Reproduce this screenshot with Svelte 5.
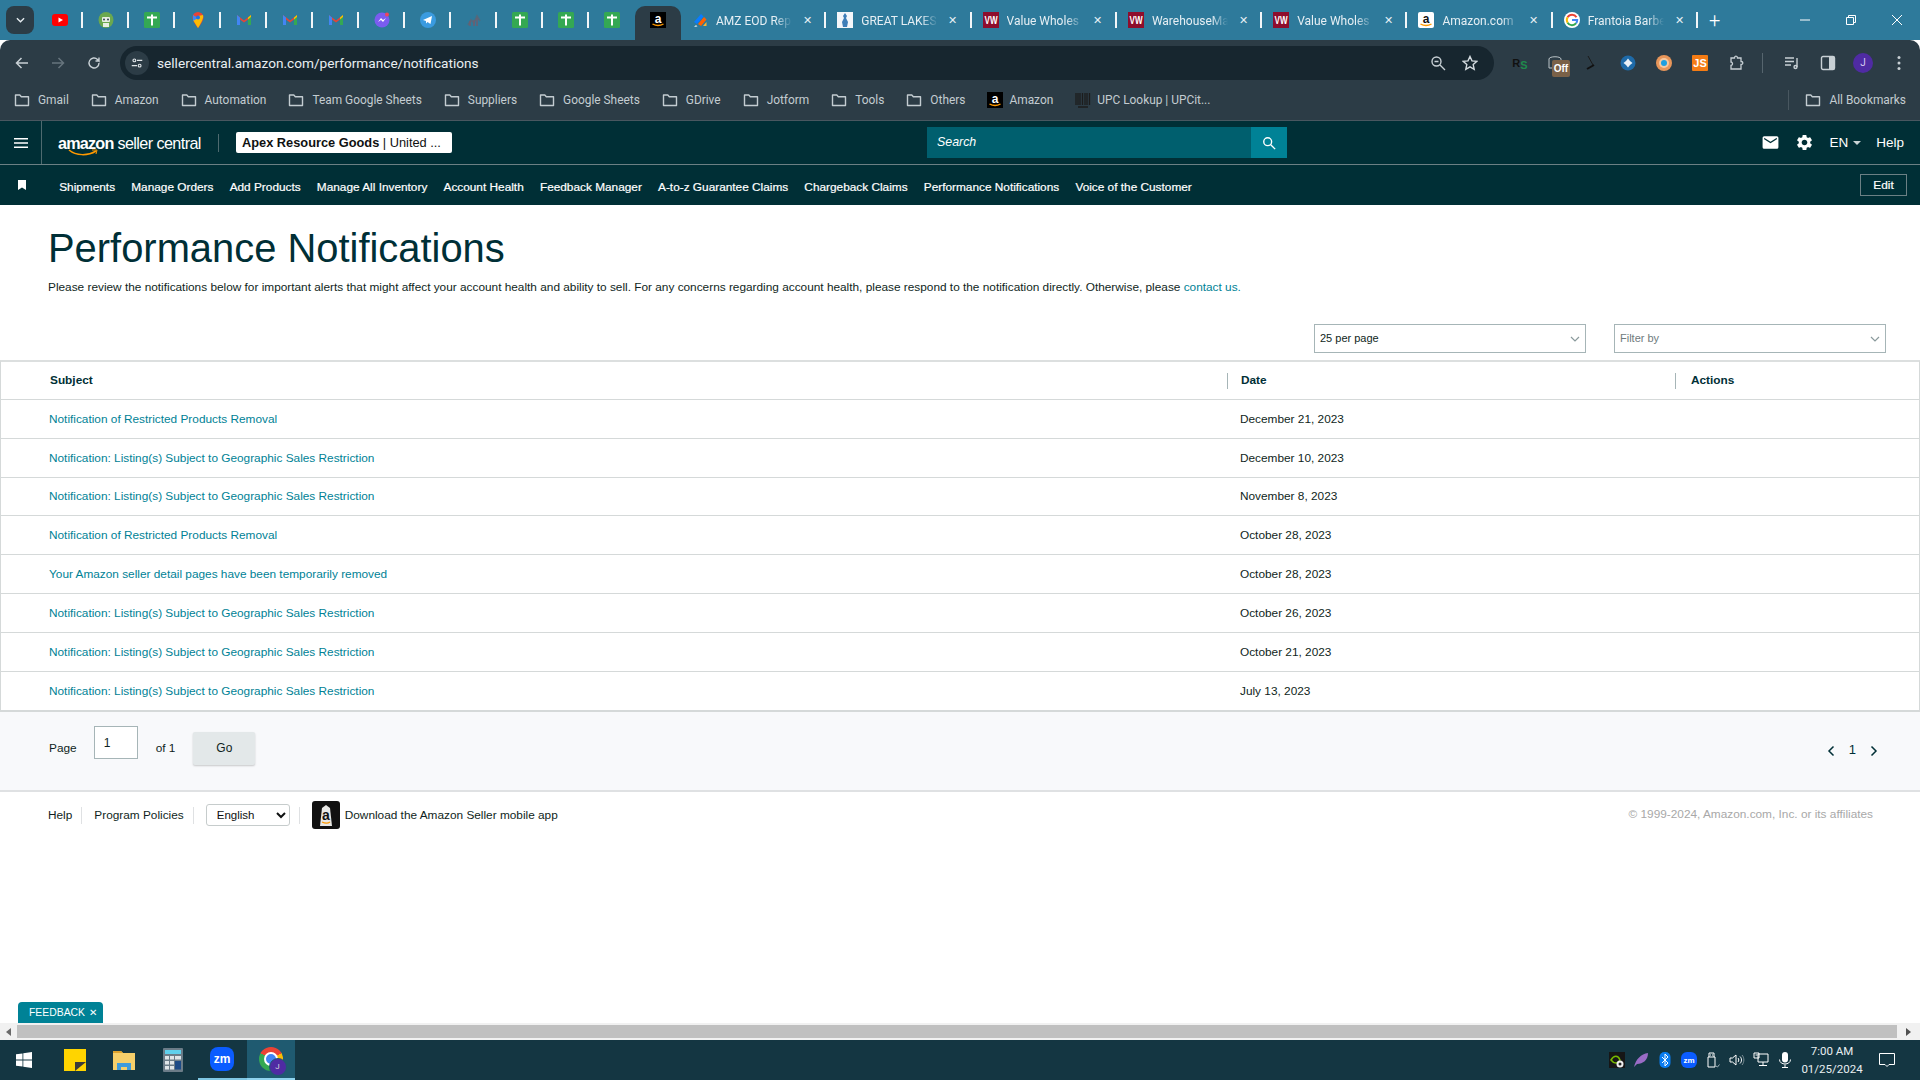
<script>
	const pinned = ['youtube', 'robot', 'sheets', 'maps', 'gmail', 'gmail', 'gmail', 'messenger', 'telegram', 'chart', 'sheets', 'sheets', 'sheets'];
	const tabs = [
		{ icon: 'jot', title: 'AMZ EOD Rep' },
		{ icon: 'lakes', title: 'GREAT LAKES' },
		{ icon: 'vw', title: 'Value Wholes' },
		{ icon: 'vw', title: 'WarehouseMa' },
		{ icon: 'vw', title: 'Value Wholes' },
		{ icon: 'amazon', title: 'Amazon.com' },
		{ icon: 'google', title: 'Frantoia Barbe' }
	];
	const bookmarks = ['Gmail', 'Amazon', 'Automation', 'Team Google Sheets', 'Suppliers', 'Google Sheets', 'GDrive', 'Jotform', 'Tools', 'Others'];
	const navLinks = ['Shipments', 'Manage Orders', 'Add Products', 'Manage All Inventory', 'Account Health', 'Feedback Manager', 'A-to-z Guarantee Claims', 'Chargeback Claims', 'Performance Notifications', 'Voice of the Customer'];
	const restricted = 'Notification of Restricted Products Removal';
	const geo = 'Notification: Listing(s) Subject to Geographic Sales Restriction';
	const rows = [
		{ subject: restricted, date: 'December 21, 2023' },
		{ subject: geo, date: 'December 10, 2023' },
		{ subject: geo, date: 'November 8, 2023' },
		{ subject: restricted, date: 'October 28, 2023' },
		{ subject: 'Your Amazon seller detail pages have been temporarily removed', date: 'October 28, 2023' },
		{ subject: geo, date: 'October 26, 2023' },
		{ subject: geo, date: 'October 21, 2023' },
		{ subject: geo, date: 'July 13, 2023' }
	];
</script>

{#snippet favicon(kind)}
	<svg class="fav" viewBox="0 0 16 16">
		{#if kind === 'youtube'}
			<rect y="2" width="16" height="12" rx="3" fill="#f00" />
			<path d="M6.500 5.500 11 8l-4.500 2.500z" fill="#fff" />
		{:else if kind === 'robot'}
			<ellipse cx="8" cy="8" rx="7.500" ry="8" fill="#6aa84f" />
			<rect x="4" y="5" width="8" height="5" rx="1" fill="#e8eee4" />
			<circle cx="6" cy="7.500" r="1" fill="#345" />
			<circle cx="10" cy="7.500" r="1" fill="#345" />
			<rect x="5" y="11" width="6" height="4" fill="#e8eee4" />
		{:else if kind === 'sheets'}
			<rect width="16" height="16" rx="1.500" fill="#34a853" />
			<path d="M3 5.500h10M8 2.500v11" stroke="#fff" stroke-width="2" />
		{:else if kind === 'maps'}
			<path d="M8 0a5.500 5.500 0 0 0-5.500 5.500C2.500 9.500 8 16 8 16s5.500-6.500 5.500-10.500A5.500 5.500 0 0 0 8 0z" fill="#ea4335" />
			<path d="M3 8l5-4 5-1c1 3-2 8-5 13z" fill="#fbbc04" />
			<path d="M3 3l5 3-5 3z" fill="#4285f4" />
			<circle cx="8" cy="5.500" r="2" fill="#1a73e8" />
		{:else if kind === 'gmail'}
			<path d="M1 13V3l7 5.500L15 3v10h-3V7.500L8 10.500 4 7.500V13z" fill="#ea4335" />
			<path d="M1 13V3l3 2.400V13z" fill="#4285f4" />
			<path d="M15 13V3l-3 2.400V13z" fill="#34a853" />
			<path d="M12 5.400 15 3v2l-3 2.500z" fill="#fbbc04" />
		{:else if kind === 'messenger'}
			<circle cx="8" cy="8" r="7.500" fill="#7a5cf0" />
			<path d="M4 10l3-4 2 2 3-2-3 4-2-2z" fill="#fff" />
			<circle cx="13" cy="2.500" r="2" fill="#f0445b" />
		{:else if kind === 'telegram'}
			<circle cx="8" cy="8" r="8" fill="#3a9be0" />
			<path d="M3 8l9-4-1.500 8-3-2-1.500 1.500V9z" fill="#fff" />
		{:else if kind === 'chart'}
			<path d="M2 13l3-5 3 3 3-7 3 5" fill="none" stroke="#56687a" stroke-width="1.500" />
			<path d="M4 14V9M8 14V8M11 14V6" stroke="#6e5d70" stroke-width="1.500" />
		{:else if kind === 'jot'}
			<path d="M2 10 9 2l2.500 2.500L5 12z" fill="#0a7cff" />
			<path d="M6 12l6-7 2.500 2.500L9 14z" fill="#ff6100" />
			<path d="M11 14l3.500-4v4z" fill="#ffb629" />
			<path d="M2 15l2-2 1.500 1.500z" fill="#dfe8ef" />
		{:else if kind === 'lakes'}
			<rect width="16" height="16" fill="#f4f7fa" />
			<path d="M8 1l2 3-1 2 2 4-1 5H6l-1-5 2-4-1-2z" fill="#3f7fb8" />
		{:else if kind === 'vw'}
			<rect width="16" height="16" fill="#8e0d2c" />
			<text x="1.500" y="12" class="fav-vw" textLength="13" lengthAdjust="spacingAndGlyphs">VW</text>
		{:else if kind === 'amazon'}
			<rect width="16" height="16" rx="2" fill="#fff" />
			<text x="8" y="10.800" class="fav-a dark" text-anchor="middle">a</text>
			<path d="M2.500 12c3.500 2 7.500 2 11 0" fill="none" stroke="#f90" stroke-width="1.400" />
		{:else if kind === 'amazon-black'}
			<rect width="16" height="16" fill="#000" />
			<text x="8" y="10.800" class="fav-a" text-anchor="middle">a</text>
			<path d="M2.500 12c3.500 2 7.500 2 11 0" fill="none" stroke="#f90" stroke-width="1.400" />
		{:else if kind === 'google'}
			<circle cx="8" cy="8" r="8" fill="#fff" />
			<path d="M12.500 5.200A5.200 5.200 0 0 0 3.600 5.300" fill="none" stroke="#ea4335" stroke-width="2" />
			<path d="M3.600 5.300a5.200 5.200 0 0 0 0 5.400" fill="none" stroke="#fbbc04" stroke-width="2" />
			<path d="M3.600 10.700a5.200 5.200 0 0 0 8.600.400" fill="none" stroke="#34a853" stroke-width="2" />
			<path d="M12.200 11.100A5.200 5.200 0 0 0 13.200 8H8" fill="none" stroke="#4285f4" stroke-width="2" />
		{:else if kind === 'upc'}
			<path d="M1 1v12M3 1v12M5 1v12M7.500 1v12M10 1v12M12 1v12M14.500 1v12" stroke="#1c1c1c" stroke-width="1.300" />
			<path d="M3 15h10" stroke="#1c1c1c" stroke-width="1.500" />
		{/if}
	</svg>
{/snippet}

{#snippet folder()}
	<svg class="folder" viewBox="0 0 16 16" fill="none">
		<path d="M1.500 3h4.300l1.500 1.700h7.200v8.800h-13z" stroke="#c3ccd1" stroke-width="1.400" stroke-linejoin="round" />
	</svg>
{/snippet}

{#snippet chevronDown()}
	<svg class="select-chevron" viewBox="0 0 10 6" fill="none">
		<path d="M1 1l4 4 4-4" stroke="#8a9a9c" stroke-width="1.200" />
	</svg>
{/snippet}

<div class="screen">
	<div class="tabstrip">
		<button class="tab-search" aria-label="Search tabs">
			<svg viewBox="0 0 10 6" fill="none"><path d="M1 1l4 4 4-4" stroke="#e6edf1" stroke-width="1.500" /></svg>
		</button>
		{#each pinned as icon}
			<div class="tab-pinned">{@render favicon(icon)}</div>
		{/each}
		<div class="tab-pinned active">{@render favicon('amazon-black')}</div>
		{#each tabs as tab}
			<div class="tab">
				{@render favicon(tab.icon)}
				<span class="tab-title">{tab.title}</span>
				<span class="tab-close">✕</span>
			</div>
		{/each}
		<span class="tab-new">+</span>
		<div class="window-controls">
			<svg viewBox="0 0 12 12" fill="none"><path d="M1 6h10" stroke="#fff" /></svg>
			<svg viewBox="0 0 12 12" fill="none"><path d="M1.500 3.500h7v7h-7zM3.500 3.500v-2h7v7h-2" stroke="#fff" /></svg>
			<svg viewBox="0 0 12 12" fill="none"><path d="M1 1l10 10M11 1 1 11" stroke="#fff" /></svg>
		</div>
	</div>

	<div class="toolbar">
		<svg class="tool" viewBox="0 0 16 16" fill="none"><path d="M14 8H3M7.500 3 2.500 8l5 5" stroke="#c8d0d5" stroke-width="1.500" /></svg>
		<svg class="tool" viewBox="0 0 16 16" fill="none"><path d="M2 8h11M8.500 3l5 5-5 5" stroke="#66747d" stroke-width="1.500" /></svg>
		<svg class="tool" viewBox="0 0 16 16" fill="none"><path d="M13 8a5 5 0 1 1-1.500-3.600L13 6V2.500M13 6H9.500" stroke="#c8d0d5" stroke-width="1.400" /></svg>
		<div class="omnibox">
			<span class="site-info">
				<svg viewBox="0 0 16 16" fill="none" stroke="#dfe5e8" stroke-width="1.300">
					<circle cx="5" cy="5" r="1.600" /><path d="M8 5h6M2 11h6" /><circle cx="11" cy="11" r="1.600" />
				</svg>
			</span>
			<span class="url">sellercentral.amazon.com/performance/notifications</span>
			<svg class="omni-icon" viewBox="0 0 16 16" fill="none" stroke="#c8d0d5" stroke-width="1.400"><circle cx="6.500" cy="6.500" r="4.500" /><path d="M10 10l5 5M4.500 6.500h4" /></svg>
			<svg class="omni-icon star" viewBox="0 0 16 16" fill="none" stroke="#d5dce0" stroke-width="1.400"><path d="M8 1.500l2 4.400 4.700.5-3.500 3.200 1 4.700L8 11.900l-4.200 2.400 1-4.700L1.300 6.400 6 5.900z" /></svg>
		</div>
		<div class="extensions">
			<span class="ext"><span class="ext-r">R</span><span class="ext-s">S</span></span>
			<span class="ext ext-off"><svg viewBox="0 0 16 16" fill="none"><path d="M1 4c0-3 12-3 12 0v9H1z" stroke="#bbc4c8" /></svg><span class="off-badge">Off</span></span>
			<span class="ext"><svg viewBox="0 0 16 16" fill="none"><path d="M4 1l5 9" stroke="#1a1a1a" /><path d="M3 14l7-4" stroke="#111" stroke-width="2" /></svg></span>
			<span class="ext"><svg viewBox="0 0 16 16"><circle cx="8" cy="8" r="7.500" fill="#1e6aa8" /><path d="M8 3.500 10 6 8 8 6 6zM8 12.500 6 10l2-2 2 2zM3.500 8 6 6l2 2-2 2zM12.500 8 10 10 8 8l2-2z" fill="#e9f1f8" /></svg></span>
			<span class="ext"><svg viewBox="0 0 16 16"><circle cx="8" cy="8" r="8" fill="#e8965a" /><circle cx="8" cy="8" r="5" fill="#f5c9a2" /><circle cx="8" cy="8" r="3" fill="#1e9fe0" /></svg></span>
			<span class="ext ext-js">JS</span>
			<span class="ext"><svg viewBox="0 0 16 16" fill="none"><path d="M3 3h3.500c0-2.500 3-2.500 3 0H13v3.500c2.500 0 2.500 3 0 3V14H3v-3.500c2 0 2-3.500 0-3.500z" stroke="#c8d0d5" stroke-width="1.300" /></svg></span>
		</div>
		<span class="tool-sep"></span>
		<svg class="tool-r" viewBox="0 0 16 16" fill="none" stroke="#c8d0d5" stroke-width="1.400"><path d="M1 3h9M1 6.500h9M1 10h6M13 3v9" /><circle cx="11.500" cy="12" r="1.500" /></svg>
		<svg class="tool-r" viewBox="0 0 16 16"><rect x="1.500" y="1.500" width="13" height="13" rx="1.500" fill="none" stroke="#c8d0d5" stroke-width="1.400" /><rect x="9" y="2" width="5" height="12" fill="#c8d0d5" /></svg>
		<span class="avatar">J</span>
		<svg class="tool-r" viewBox="0 0 16 16" fill="#c8d0d5"><circle cx="8" cy="2.500" r="1.500" /><circle cx="8" cy="8" r="1.500" /><circle cx="8" cy="13.500" r="1.500" /></svg>
	</div>

	<div class="bookmarks">
		{#each bookmarks as name}
			<span class="bookmark">{@render folder()}{name}</span>
		{/each}
		<span class="bookmark fav-mark">{@render favicon('amazon-black')}Amazon</span>
		<span class="bookmark fav-mark">{@render favicon('upc')}UPC Lookup | UPCit...</span>
		<span class="bookmark-all">{@render folder()}All Bookmarks</span>
	</div>

	<header class="sc-header">
		<div class="menu-cell">
			<svg viewBox="0 0 14 12" fill="#fff"><path d="M0 1h14v1.500H0zM0 5.250h14v1.500H0zM0 9.500h14V11H0z" /></svg>
		</div>
		<div class="logo">
			<span class="logo-amazon">amazon<svg viewBox="0 0 30 8" fill="none"><path d="M1 1c7 6 19 6 27 1" stroke="#f90" stroke-width="1.500" /><path d="M24 1h5l-1 4" stroke="#f90" stroke-width="1" /></svg></span>
			<span class="logo-seller">seller central</span>
		</div>
		<div class="account"><strong>Apex Resource Goods</strong> | United ...</div>
		<div class="search">
			<span class="search-input">Search</span>
			<span class="search-btn">
				<svg viewBox="0 0 16 16" fill="none" stroke="#fff" stroke-width="1.600"><circle cx="6.500" cy="6.500" r="4.500" /><path d="M10 10l5 5" /></svg>
			</span>
		</div>
		<div class="header-right">
			<svg class="mail" viewBox="0 0 24 24" fill="#fff"><path d="M20 4H4a2 2 0 0 0-2 2v12a2 2 0 0 0 2 2h16a2 2 0 0 0 2-2V6a2 2 0 0 0-2-2zm0 4-8 5-8-5V6l8 5 8-5v2z" /></svg>
			<svg class="gear" viewBox="0 0 24 24" fill="#fff"><path d="M19.140 12.940c.04-.3.06-.61.06-.94 0-.32-.02-.64-.07-.94l2.030-1.580a.49.49 0 0 0 .12-.61l-1.920-3.320a.488.488 0 0 0-.59-.22l-2.390.96c-.5-.38-1.030-.7-1.620-.94l-.36-2.540a.484.484 0 0 0-.48-.41h-3.840c-.24 0-.43.17-.47.41l-.36 2.540c-.59.24-1.130.57-1.620.94l-2.390-.96c-.22-.08-.47 0-.59.22L2.740 8.870c-.12.21-.08.47.12.61l2.030 1.580c-.05.3-.09.63-.09.94s.02.64.07.94l-2.030 1.580a.49.49 0 0 0-.12.61l1.920 3.320c.12.22.37.29.59.22l2.390-.96c.5.38 1.030.7 1.620.94l.36 2.540c.05.24.24.41.48.41h3.840c.24 0 .44-.17.47-.41l.36-2.540c.59-.24 1.130-.56 1.620-.94l2.390.96c.22.08.47 0 .59-.22l1.920-3.320c.12-.22.07-.47-.12-.61l-2.010-1.580zM12 15.600c-1.980 0-3.600-1.620-3.600-3.600s1.620-3.600 3.600-3.600 3.600 1.620 3.600 3.600-1.620 3.600-3.600 3.600z" /></svg>
			<span class="lang">EN<i class="caret"></i></span>
			<span class="help">Help</span>
		</div>
	</header>

	<nav class="sc-nav">
		<svg class="bookmark-flag" viewBox="0 0 8 10" fill="#fff"><path d="M0 0h8v10L4 7.500 0 10z" /></svg>
		{#each navLinks as link}
			<span class="nav-link">{link}</span>
		{/each}
		<span class="edit-btn">Edit</span>
	</nav>

	<main class="page">
		<div class="intro">
			<h1>Performance Notifications</h1>
			<p>Please review the notifications below for important alerts that might affect your account health and ability to sell. For any concerns regarding account health, please respond to the notification directly. Otherwise, please <span class="link">contact us.</span></p>
		</div>

		<div class="controls">
			<div class="fake-select">25 per page{@render chevronDown()}</div>
			<div class="fake-select placeholder">Filter by{@render chevronDown()}</div>
		</div>

		<div class="table">
			<div class="row head">
				<div class="cell subject-cell">Subject</div>
				<div class="cell"><span class="head-sep"></span>Date</div>
				<div class="cell actions-cell"><span class="head-sep"></span>Actions</div>
			</div>
			{#each rows as row}
				<div class="row">
					<div class="cell link">{row.subject}</div>
					<div class="cell date">{row.date}</div>
					<div class="cell"></div>
				</div>
			{/each}
		</div>

		<div class="pager">
			<div class="pager-left">
				<span>Page</span>
				<input class="page-input" value="1" />
				<span>of 1</span>
				<button class="go">Go</button>
			</div>
			<div class="pager-right">
				<svg viewBox="0 0 8 12" fill="none"><path d="M6.500 1.500 2 6l4.500 4.500" stroke="#002f36" stroke-width="1.500" /></svg>
				<span>1</span>
				<svg viewBox="0 0 8 12" fill="none"><path d="M1.500 1.500 6 6l-4.500 4.500" stroke="#002f36" stroke-width="1.500" /></svg>
			</div>
		</div>

		<footer class="footer">
			<span class="foot-link">Help</span>
			<span class="foot-sep"></span>
			<span class="foot-link">Program Policies</span>
			<span class="foot-sep"></span>
			<select class="lang-select"><option>English</option></select>
			<span class="foot-sep"></span>
			<svg class="app-icon" viewBox="0 0 28 28">
				<rect width="28" height="28" rx="3" fill="#111" />
				<path d="M10 7l4-3 4 3 2 18H8z" fill="#e8e8e6" />
				<text x="14" y="19" class="app-a" text-anchor="middle">a</text>
				<path d="M10 21c3 1.500 6 1.500 8 0" fill="none" stroke="#f90" stroke-width="1.200" />
			</svg>
			<span class="foot-link app-text">Download the Amazon Seller mobile app</span>
			<span class="copyright">© 1999-2024, Amazon.com, Inc. or its affiliates</span>
		</footer>
	</main>

	<div class="feedback">FEEDBACK <span class="feedback-x">✕</span></div>

	<div class="scrollbar">
		<i class="arrow-left"></i>
		<div class="thumb"></div>
		<i class="arrow-right"></i>
	</div>

	<div class="taskbar">
		<svg class="win" viewBox="0 0 16 16" fill="#fff"><path d="M0 2.300 6.500 1.400v6.200H0zM7.300 1.300 16 0v7.600H7.300zM0 8.400h6.500v6.200L0 13.700zM7.300 8.400H16V16l-8.700-1.300z" /></svg>
		<span class="task">
			<svg viewBox="0 0 24 24"><rect x="1" y="1" width="22" height="22" fill="#ffd400" /><path d="M12 23V14h11z" fill="#3a3a3a" /></svg>
		</span>
		<span class="task">
			<svg viewBox="0 0 24 24"><path d="M1 3h8l2 2h12v17H1z" fill="#f6cf6a" /><path d="M1 3h8l2 2H1z" fill="#dea22d" /><path d="M5 22v-7h14v7h-4v-3H9v3z" fill="#3f9bdc" /></svg>
		</span>
		<span class="task">
			<svg viewBox="0 0 24 24"><rect x="2" y="0" width="20" height="24" rx="1" fill="#6b7c88" /><rect x="4" y="2" width="16" height="4" fill="#5fd0ec" /><path d="M4 8h4v3.500H4zM9 8h4v3.500H9zM4 13h4v3.500H4zM9 13h4v3.500H9zM4 18h4v3.500H4zM9 18h4v3.500H9z" fill="#dfe5e8" /><rect x="14" y="13" width="6" height="8.500" fill="#1c4a86" /><rect x="14" y="8" width="6" height="3.500" fill="#dfe5e8" /></svg>
		</span>
		<span class="task zoom-task">
			<svg viewBox="0 0 24 24"><rect width="24" height="24" rx="8" fill="#0b5cff" /><text x="12" y="16" class="zm" text-anchor="middle">zm</text></svg>
		</span>
		<span class="task chrome-task">
			<span class="chrome"><i></i></span>
			<span class="chrome-badge">J</span>
		</span>
		<div class="tray">
			<span class="tray-icon nvidia"><svg viewBox="0 0 16 16"><rect width="16" height="16" fill="#161616" /><path d="M2 8c3-5 7-5 9 0-2 4-6 4-9 0z" fill="none" stroke="#76b900" stroke-width="1.500" /><circle cx="11" cy="12" r="3.500" fill="#eee" /><circle cx="11" cy="12" r="1.500" fill="#222" /></svg></span>
			<span class="tray-icon"><svg viewBox="0 0 16 16"><path d="M1 15C3 7 8 2 15 1c0 7-5 11-11 11z" fill="#9a6cc6" /></svg></span>
			<span class="tray-icon"><svg viewBox="0 0 16 16"><rect x="2.500" width="11" height="16" rx="5" fill="#0a7cf0" /><path d="M5 5l6 6-3 3V2l3 3-6 6" fill="none" stroke="#fff" stroke-width="1" /></svg></span>
			<span class="tray-icon"><svg viewBox="0 0 24 24"><rect width="24" height="24" rx="9" fill="#0b5cff" /><text x="12" y="16" class="zm" text-anchor="middle">zm</text></svg></span>
			<span class="tray-icon"><svg viewBox="0 0 16 16" fill="none" stroke="#fff"><path d="M3 5h7v10H3zM4 5V1h5v4" /><path d="M5.500 2.500v1M7.500 2.500v1" /><path d="M11 14l1.500 1 2-2.500" stroke="#9fb0b8" /></svg></span>
			<span class="tray-icon"><svg viewBox="0 0 16 16" fill="none" stroke="#fff"><path d="M1 6h2.500L7 3v10L3.500 10H1z" /><path d="M9 6c1 1 1 3 0 4M11 4.500c2 2 2 5 0 7" /><path d="M13 3c2.500 3 2.500 7 0 10" stroke="#7d8f97" /></svg></span>
			<span class="tray-icon"><svg viewBox="0 0 16 16" fill="none" stroke="#fff"><path d="M5 2h10v8H5zM10 10v3M6 13.500h8M1 1h5v5H1z" /><path d="M2.500 3h2" /></svg></span>
			<span class="tray-icon"><svg viewBox="0 0 16 16" fill="#fff"><rect x="5" y="0" width="6" height="10.500" rx="3" /><path d="M2.500 7.500c0 6 11 6 11 0M8 12.500V15M5 15.500h6" fill="none" stroke="#fff" /></svg></span>
			<div class="clock"><span>7:00 AM</span><span>01/25/2024</span></div>
			<svg class="notify" viewBox="0 0 16 16" fill="none" stroke="#fff" stroke-width="1"><path d="M.5 1.500h15v11h-5.500L8 14.500l-2-2H.5z" /></svg>
		</div>
	</div>
</div>

<style>
	:global(body) {
		margin: 0;
		background: #fff;
	}

	.screen {
		position: relative;
		width: 1920px;
		height: 1080px;
		overflow: hidden;
		display: flex;
		flex-direction: column;
		font-family: 'Liberation Sans', Arial, sans-serif;
		font-size: 11.83px;
		color: #0f1111;
	}

	/* browser chrome */
	.tabstrip {
		height: 40px;
		background: #2e7a9b;
		display: flex;
		flex: none;
		font-family: Roboto, sans-serif;
		font-size: 12px;
		color: #e6eff4;
	}

	.tab-search {
		width: 28px;
		height: 28px;
		margin: 6px 3px 0 6px;
		padding: 0;
		border: 0;
		border-radius: 8px;
		background: #2c3c46;
		display: flex;
		align-items: center;
		justify-content: center;
	}

	.tab-search svg {
		width: 9px;
		height: 6px;
	}

	.tab-pinned {
		width: 46px;
		height: 34px;
		margin-top: 6px;
		padding-bottom: 6px;
		box-sizing: border-box;
		display: flex;
		align-items: center;
		justify-content: center;
		position: relative;
		flex: none;
	}

	.tab-pinned::after,
	.tab::after {
		content: '';
		position: absolute;
		right: 0;
		top: 6px;
		height: 16px;
		width: 2px;
		background: #f2f6f8;
	}

	.tab-pinned.active {
		background: #2c3c46;
		border-radius: 10px 10px 0 0;
	}

	.tab-pinned.active::after,
	.tab-pinned:has(+ .active)::after {
		display: none;
	}

	.fav {
		width: 16px;
		height: 16px;
		flex: none;
	}

	.fav-vw {
		font: bold 10px 'Liberation Sans', sans-serif;
		fill: #fff;
	}

	.fav-a {
		font: bold 12px 'Liberation Sans', sans-serif;
		fill: #fff;
	}

	.fav-a.dark {
		fill: #111;
	}

	.tab {
		width: 145.3px;
		height: 34px;
		margin-top: 6px;
		flex: none;
		position: relative;
		box-sizing: border-box;
		padding: 0 12px 6px 11px;
		display: flex;
		align-items: center;
		gap: 8px;
	}

	.tab-title {
		flex: 1;
		min-width: 0;
		padding-top: 2px;
		white-space: nowrap;
		overflow: hidden;
		-webkit-mask-image: linear-gradient(90deg, #000 78%, transparent 100%);
		mask-image: linear-gradient(90deg, #000 78%, transparent 100%);
	}

	.tab-close {
		font-size: 11px;
		width: 14px;
		text-align: center;
	}

	.tab-new {
		font-size: 20px;
		font-weight: 300;
		color: #fff;
		margin: 4px 0 0 11px;
		line-height: 32px;
	}

	.window-controls {
		margin-left: auto;
		display: flex;
		gap: 34px;
		padding: 14px 17px 0 0;
	}

	.window-controls svg {
		width: 12px;
		height: 12px;
	}

	.toolbar {
		height: 40px;
		background: #2c3c46;
		flex: none;
		display: flex;
		align-items: center;
		box-sizing: border-box;
		padding: 6px 0 0 14px;
		border-radius: 10px 10px 0 0;
		font-family: Roboto, sans-serif;
	}

	.tool {
		width: 16px;
		height: 16px;
		margin-right: 20px;
		flex: none;
	}

	.omnibox {
		width: 1374px;
		height: 34px;
		margin-left: -2px;
		background: #17262f;
		border-radius: 17px;
		display: flex;
		align-items: center;
		box-sizing: border-box;
		padding-left: 5px;
		flex: none;
	}

	.site-info {
		width: 24px;
		height: 24px;
		border-radius: 50%;
		background: #2c3c46;
		display: flex;
		align-items: center;
		justify-content: center;
	}

	.site-info svg {
		width: 14px;
		height: 14px;
	}

	.url {
		margin-left: 8px;
		font-size: 13.65px;
		color: #e8eef1;
	}

	.omni-icon {
		width: 16px;
		height: 16px;
		margin-left: auto;
		margin-right: 16px;
	}

	.omni-icon.star {
		margin-left: 0;
	}

	.extensions {
		display: flex;
		align-items: center;
		gap: 20px;
		margin-left: 18px;
		flex: none;
	}

	.ext {
		width: 16px;
		height: 16px;
		display: flex;
		align-items: center;
		justify-content: center;
		position: relative;
		flex: none;
		font: bold 11px 'Liberation Sans', sans-serif;
	}

	.ext svg {
		width: 16px;
		height: 16px;
	}

	.ext-r {
		color: #111;
	}

	.ext-s {
		color: #1f8b4c;
		margin-top: 3px;
	}

	.off-badge {
		position: absolute;
		left: 4px;
		top: 5px;
		width: 18px;
		height: 17px;
		background: #7a6148;
		border-radius: 2px;
		color: #fff;
		font: bold 10px/17px 'Liberation Sans', sans-serif;
		text-align: center;
	}

	.ext-js {
		background: #f57c14;
		color: #fff;
		border-radius: 1px;
	}

	.tool-sep {
		width: 1px;
		height: 20px;
		background: #56656e;
		margin: 0 21px 0 18px;
		flex: none;
	}

	.tool-r {
		width: 16px;
		height: 16px;
		margin-right: 20px;
		flex: none;
	}

	.avatar {
		width: 20px;
		height: 20px;
		border-radius: 50%;
		background: #4f2ba3;
		color: #d8ccf2;
		font-size: 10px;
		line-height: 20px;
		text-align: center;
		margin: 0 18px 0 -3px;
		flex: none;
	}

	.bookmarks {
		height: 41px;
		box-sizing: border-box;
		background: #2c3c46;
		border-bottom: 1px solid #495760;
		flex: none;
		display: flex;
		align-items: center;
		padding: 0 14px 0 3px;
		font-family: Roboto, sans-serif;
		font-size: 11.9px;
		color: #c3ccd1;
	}

	.bookmark,
	.bookmark-all {
		display: flex;
		align-items: center;
		gap: 8px;
		padding: 0 11px;
		white-space: nowrap;
	}

	.fav-mark {
		gap: 6px;
	}

	.bookmark-all {
		margin-left: auto;
		padding: 0 0 0 16px;
		border-left: 1px solid #495760;
		height: 20px;
	}

	.folder {
		width: 16px;
		height: 16px;
		flex: none;
	}

	/* seller central header */
	.sc-header {
		height: 44px;
		box-sizing: border-box;
		background: #002f36;
		border-bottom: 1px solid #6c8084;
		flex: none;
		display: flex;
		align-items: center;
		color: #fff;
	}

	.menu-cell {
		width: 42px;
		height: 100%;
		box-sizing: border-box;
		border-right: 1px solid #4e6a6f;
		display: flex;
		align-items: center;
		justify-content: center;
		flex: none;
	}

	.menu-cell svg {
		width: 14px;
		height: 12px;
	}

	.logo {
		margin-left: 16px;
		width: 160px;
		height: 18px;
		border-right: 1px solid #4e6a6f;
		display: flex;
		align-items: center;
		gap: 4px;
		flex: none;
		font-size: 16.2px;
		line-height: 16px;
	}

	.logo-amazon {
		font-weight: bold;
		letter-spacing: -0.8px;
		position: relative;
	}

	.logo-amazon svg {
		position: absolute;
		left: 8px;
		top: 14px;
		width: 34px;
		height: 8px;
	}

	.logo-seller {
		letter-spacing: -0.6px;
	}

	.account {
		margin-left: 17px;
		width: 216px;
		height: 21px;
		box-sizing: border-box;
		padding-left: 6px;
		background: #fff;
		border-radius: 2px;
		color: #0f1111;
		font-size: 12.8px;
		line-height: 21px;
		flex: none;
		white-space: nowrap;
		overflow: hidden;
	}

	.account strong {
		font-weight: 600;
	}

	.search {
		margin-left: 475px;
		width: 360px;
		height: 31px;
		display: flex;
		flex: none;
	}

	.search-input {
		flex: 1;
		background: #005f6e;
		font-style: italic;
		font-size: 12.4px;
		line-height: 31px;
		padding-left: 10px;
	}

	.search-btn {
		width: 36px;
		background: #008296;
		display: flex;
		align-items: center;
		justify-content: center;
	}

	.search-btn svg {
		width: 14px;
		height: 14px;
	}

	.header-right {
		margin-left: auto;
		display: flex;
		align-items: center;
		font-size: 13.5px;
		padding-right: 16px;
	}

	.mail {
		width: 19px;
		height: 19px;
		margin-right: 15px;
	}

	.gear {
		width: 19px;
		height: 19px;
		margin-right: 15px;
	}

	.lang {
		display: flex;
		align-items: center;
		margin-right: 15px;
	}

	.caret {
		width: 0;
		height: 0;
		border: 4px solid transparent;
		border-top-color: #c9d4d6;
		border-bottom: 0;
		margin-left: 5px;
	}

	.sc-nav {
		height: 40px;
		background: #002f36;
		flex: none;
		display: flex;
		align-items: center;
		box-sizing: border-box;
		padding: 4px 0 0 18px;
		gap: 16.2px;
		color: #fff;
		-webkit-text-stroke: 0.2px #fff;
	}

	.bookmark-flag {
		width: 8px;
		height: 10px;
		margin: -5px 17px 0 0;
	}

	.edit-btn {
		margin-left: auto;
		margin-right: 13px;
		margin-top: -5px;
		width: 47px;
		height: 22px;
		box-sizing: border-box;
		border: 1px solid #6c8084;
		line-height: 20px;
		text-align: center;
	}

	/* page */
	.page {
		flex: 1;
		background: #fff;
		min-height: 0;
	}

	.intro {
		padding: 19px 0 0 48px;
	}

	h1 {
		margin: 0;
		font-size: 39.9px;
		font-weight: 400;
		line-height: 48px;
		color: #002f36;
	}

	.intro p {
		margin: 7px 0 0;
		line-height: 16px;
		color: #0f1f22;
	}

	.link {
		color: #008296;
	}

	.controls {
		display: flex;
		justify-content: flex-end;
		gap: 28px;
		padding: 29px 34px 0 0;
	}

	.fake-select {
		width: 272px;
		height: 29px;
		box-sizing: border-box;
		border: 1px solid #a6b5b7;
		font-size: 11px;
		line-height: 27px;
		padding-left: 5px;
		position: relative;
		color: #0f1f22;
	}

	.fake-select.placeholder {
		color: #6f7b7d;
	}

	.select-chevron {
		position: absolute;
		right: 5px;
		top: 11px;
		width: 10px;
		height: 6px;
	}

	.table {
		margin-top: 7px;
		border-top: 2px solid #dcdfdf;
		border-left: 1px solid #d5d9d9;
		border-right: 1px solid #d5d9d9;
		border-bottom: 2px solid #d5d9d9;
	}

	.row {
		display: grid;
		grid-template-columns: 1226px 448px 1fr;
		height: 38.8px;
		box-sizing: border-box;
		border-bottom: 1px solid #d5d9d9;
		align-items: center;
	}

	.row.head {
		height: 38px;
		padding-bottom: 2px;
	}

	.row:last-child {
		border-bottom: 0;
	}

	.cell {
		display: flex;
		align-items: center;
		padding-left: 14px;
		position: relative;
		white-space: nowrap;
	}

	.cell.link {
		padding-left: 48px;
	}

	.date {
		color: #0f1f22;
		padding-left: 13px;
	}

	.head .cell {
		color: #002f36;
		font-weight: 600;
	}

	.head .subject-cell {
		padding-left: 49px;
	}

	.head .actions-cell {
		padding-left: 16px;
	}

	.head-sep {
		position: absolute;
		left: 0;
		top: 0;
		width: 1px;
		height: 16px;
		background: #a6b5b7;
	}

	.pager {
		height: 80px;
		box-sizing: border-box;
		background: #f8f9fb;
		border-bottom: 2px solid #dfe1e3;
		display: flex;
		justify-content: space-between;
		padding: 14px 42px 0 49px;
	}

	.pager-left {
		display: flex;
		align-items: center;
		gap: 18px;
		height: 44px;
		color: #0f1f22;
	}

	.page-input {
		width: 44px;
		height: 33px;
		box-sizing: border-box;
		margin: 0 0 11px -1px;
		border: 1px solid #a6b5b7;
		padding: 0 0 0 9px;
		background: #fff;
		font: 12px 'Liberation Sans', sans-serif;
		color: #0f1f22;
	}

	.go {
		width: 62px;
		height: 33px;
		border: 0;
		border-radius: 2px;
		background: #e3e8e9;
		box-shadow: 0 1px 2px rgba(0, 0, 0, 0.2);
		font: 12px 'Liberation Sans', sans-serif;
		color: #0f1f22;
		padding: 0;
	}

	.pager-right {
		display: flex;
		align-items: center;
		gap: 14px;
		height: 47px;
		font-size: 13px;
		color: #002f36;
	}

	.pager-right svg {
		width: 8px;
		height: 12px;
		margin-top: 2px;
	}

	.footer {
		display: flex;
		align-items: center;
		height: 50px;
		box-sizing: border-box;
		padding: 0 47px 0 48px;
		margin-top: -2px;
	}

	.foot-link {
		color: #0f1f22;
		white-space: nowrap;
	}

	.foot-sep {
		width: 1px;
		height: 17px;
		background: #dfe1e3;
		margin: 0 12px 0 9px;
		flex: none;
	}

	.lang-select {
		width: 84px;
		height: 22px;
		border: 1px solid #c6cccc;
		border-radius: 3px;
		background: #fff;
		font: 11.5px 'Liberation Sans', sans-serif;
		padding-left: 6px;
		color: #0f1111;
	}

	.app-icon {
		width: 28px;
		height: 28px;
		margin-right: 5px;
		flex: none;
	}

	.app-a {
		font: bold 14px 'Liberation Sans', sans-serif;
		fill: #111;
	}

	.copyright {
		margin-left: auto;
		color: #a8a8a8;
		margin-bottom: 3px;
	}

	.feedback {
		position: absolute;
		left: 18px;
		top: 1002px;
		width: 85px;
		height: 21px;
		box-sizing: border-box;
		border-radius: 4px 4px 0 0;
		background: #008296;
		color: #fff;
		font-size: 10.4px;
		line-height: 21px;
		padding-left: 11px;
		white-space: nowrap;
	}

	.feedback-x {
		font-size: 10px;
		margin-left: 1px;
	}

	.scrollbar {
		height: 17px;
		background: #f1f1f1;
		flex: none;
		display: flex;
		align-items: center;
	}

	.thumb {
		flex: 1;
		height: 13px;
		background: #c0c0c0;
	}

	.arrow-left,
	.arrow-right {
		width: 17px;
		display: flex;
		justify-content: center;
		flex: none;
	}

	.arrow-left::before {
		content: '';
		border: 4px solid transparent;
		border-right: 5px solid #6a6a6a;
		border-left: 0;
	}

	.arrow-right {
		width: 23px;
	}

	.arrow-right::before {
		content: '';
		border: 4px solid transparent;
		border-left: 5px solid #505050;
		border-right: 0;
	}

	.taskbar {
		height: 40px;
		background: #143642;
		flex: none;
		display: flex;
		align-items: center;
		color: #fff;
		font-family: Roboto, sans-serif;
	}

	.win {
		width: 16px;
		height: 16px;
		margin: 0 18.5px 0 16px;
		flex: none;
	}

	.task {
		width: 49px;
		height: 40px;
		display: flex;
		align-items: center;
		justify-content: center;
		flex: none;
		position: relative;
		box-sizing: border-box;
	}

	.task svg {
		width: 24px;
		height: 24px;
	}

	.zm {
		font: bold 12px 'Liberation Sans', sans-serif;
		fill: #fff;
	}

	.zoom-task {
		border-bottom: 2px solid #7fc6e2;
	}

	.chrome-task {
		background: #1f5a70;
		border-bottom: 2px solid #8fd3ee;
		width: 48px;
	}

	.chrome {
		width: 24px;
		height: 24px;
		border-radius: 50%;
		background: conic-gradient(from 300deg, #ea4335 0 120deg, #fbbc04 120deg 240deg, #34a853 240deg 360deg);
		display: flex;
		align-items: center;
		justify-content: center;
	}

	.chrome i {
		width: 10px;
		height: 10px;
		border-radius: 50%;
		background: #4285f4;
		border: 2px solid #fff;
	}

	.chrome-badge {
		position: absolute;
		left: 22px;
		top: 18px;
		width: 16px;
		height: 16px;
		border-radius: 50%;
		background: #4f2ba3;
		border: 1px solid #1f5a70;
		font-size: 8px;
		line-height: 16px;
		text-align: center;
		color: #ddd;
	}

	.tray {
		margin-left: auto;
		display: flex;
		align-items: center;
		gap: 8px;
	}

	.tray-icon {
		width: 16px;
		height: 16px;
		display: flex;
	}

	.tray-icon svg {
		width: 16px;
		height: 16px;
	}

	.clock {
		display: flex;
		flex-direction: column;
		align-items: center;
		width: 60px;
		margin-left: 1px;
		font-size: 11.5px;
		line-height: 18px;
		color: #e9eef0;
	}

	.notify {
		width: 16px;
		height: 16px;
		margin: 0 25px 0 9px;
	}
</style>
